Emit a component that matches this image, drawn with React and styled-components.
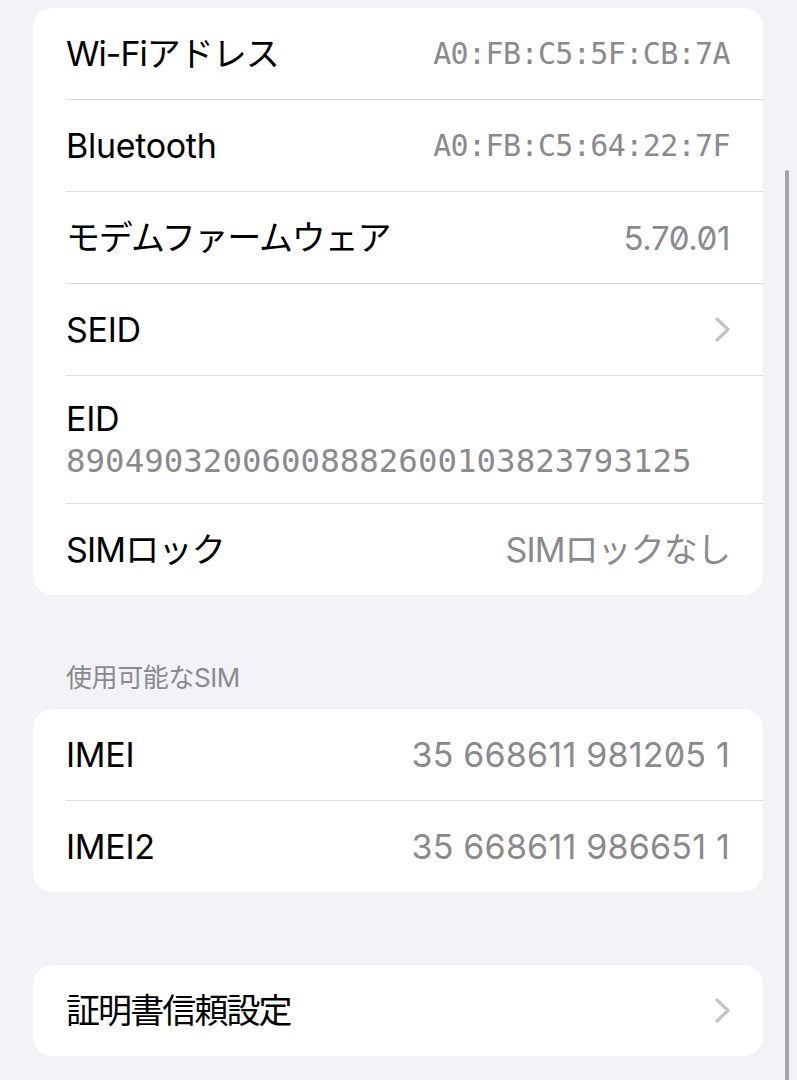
import styled, { createGlobalStyle } from 'styled-components'

const GlobalStyle = createGlobalStyle`
  html, body {
    margin: 0;
    padding: 0;
    background: #f2f2f7;
  }
  body {
    font-family: Inter, "Noto Sans CJK JP", sans-serif;
    -webkit-font-smoothing: antialiased;
  }
`

const Page = styled.div`
  position: relative;
  width: 797px;
  height: 1080px;
  overflow: hidden;
  box-sizing: border-box;
  padding: 8px 34px 0 33px;
  background: #f2f2f7;
`

const Card = styled.div`
  background: #ffffff;
  border-radius: 20px;
  overflow: hidden;
  margin-bottom: ${({ gap }) => gap || 0}px;
`

const Row = styled.div`
  display: flex;
  align-items: center;
  justify-content: space-between;
  height: ${({ tall }) => (tall ? 127 : 91)}px;
  margin-left: 33px;
  padding-right: 33px;
  border-bottom: 1px solid #dcdce0;

  &:last-child {
    border-bottom: none;
  }
`

const StackRow = styled(Row)`
  flex-direction: column;
  align-items: flex-start;
  justify-content: center;
`

const Label = styled.span`
  font-size: 34px;
  color: #000;
  letter-spacing: ${({ spacing }) => spacing ?? -0.3}px;
  line-height: 42px;
`

const Value = styled.span`
  font-size: ${({ size }) => size || 34}px;
  color: #8a8a8e;
  letter-spacing: ${({ spacing }) => spacing ?? -0.6}px;
  line-height: 42px;
  white-space: nowrap;
  font-feature-settings: 'zero' 1;
`

const MonoValue = styled(Value)`
  font-family: "DejaVu Sans Mono", "Liberation Mono", monospace;
`

const SectionHeader = styled.div`
  padding: 67px 0 15px 33px;
  font-size: 26px;
  line-height: 32px;
  color: #8a8a8e;
  letter-spacing: -0.4px;
`

const Chevron = styled.svg`
  width: 15px;
  height: 25px;
  flex: none;
`

const ScrollIndicator = styled.div`
  position: absolute;
  left: 785px;
  top: 170px;
  width: 4px;
  height: 940px;
  border-radius: 2px;
  background: #a4a4a9;
`

const Arrow = () => (
  <Chevron viewBox="0 0 15 25">
    <polyline
      points="2,2 13,12.5 2,23"
      fill="none"
      stroke="#c4c4c7"
      strokeWidth="3.2"
      strokeLinecap="round"
      strokeLinejoin="round"
    />
  </Chevron>
)

export default function App() {
  return (
    <>
      <GlobalStyle />
      <Page>
        <Card>
          <Row>
            <Label spacing={-1}>Wi-Fiアドレス</Label>
            <MonoValue size={30} spacing={-0.6}>A0:FB:C5:5F:CB:7A</MonoValue>
          </Row>
          <Row>
            <Label>Bluetooth</Label>
            <MonoValue size={30} spacing={-0.6}>A0:FB:C5:64:22:7F</MonoValue>
          </Row>
          <Row>
            <Label spacing={-1.2}>モデムファームウェア</Label>
            <Value size={33} spacing={-0.4}>5.70.01</Value>
          </Row>
          <Row>
            <Label>SEID</Label>
            <Arrow />
          </Row>
          <StackRow tall>
            <Label>EID</Label>
            <MonoValue size={32.4} spacing={0.05}>89049032006008882600103823793125</MonoValue>
          </StackRow>
          <Row>
            <Label spacing={-0.8}>SIMロック</Label>
            <Value spacing={-0.9}>SIMロックなし</Value>
          </Row>
        </Card>

        <SectionHeader>使用可能なSIM</SectionHeader>

        <Card gap={73}>
          <Row>
            <Label>IMEI</Label>
            <Value spacing={0.2}>35 668611 981205 1</Value>
          </Row>
          <Row>
            <Label>IMEI2</Label>
            <Value spacing={0.2}>35 668611 986651 1</Value>
          </Row>
        </Card>

        <Card>
          <Row>
            <Label spacing={-1.9}>証明書信頼設定</Label>
            <Arrow />
          </Row>
        </Card>

        <ScrollIndicator />
      </Page>
    </>
  )
}
